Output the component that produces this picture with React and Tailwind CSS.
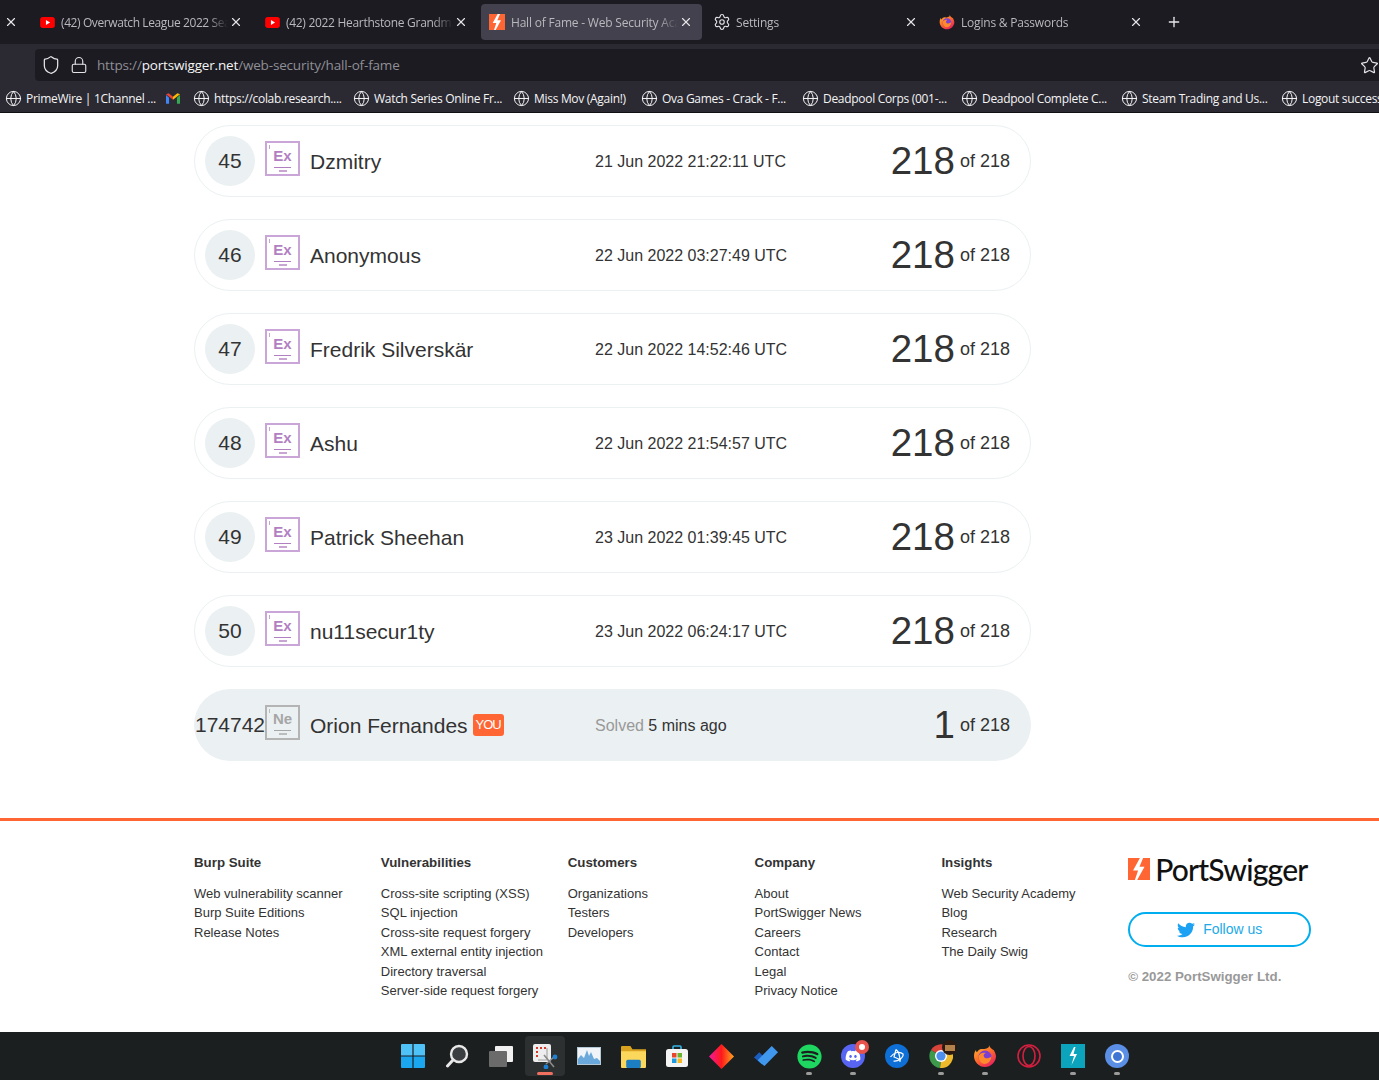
import { X, Plus, Shield, Lock, Star, Globe, Settings } from "lucide-react"
import { FaTwitter, FaSpotify, FaDiscord } from "react-icons/fa"

const Zap = ({ className }) => (
  <svg viewBox="0 0 24 24" className={className}>
    <rect width="24" height="24" fill="#ff6633" />
    <path d="M13 0 h3.5 l-4 9.5 h5.5 l-8 14.5 h-2.5 l3.5 -10.5 h-5.5z" fill="#fff" />
  </svg>
)

const YouTube = () => (
  <svg viewBox="0 0 16 12" className="w-[15px] h-[11px]">
    <rect width="16" height="12" rx="3" fill="#ff0000" />
    <path d="M6.3 3.4 L10.8 6 L6.3 8.6Z" fill="#fff" />
  </svg>
)

const FirefoxIcon = ({ className }) => (
  <svg viewBox="0 0 24 24" className={className}>
    <defs>
      <linearGradient id="ffx" x1="0" y1="0" x2="0.7" y2="1">
        <stop offset="0" stopColor="#ffbd2e" />
        <stop offset="0.55" stopColor="#ff6a2b" />
        <stop offset="1" stopColor="#e8215e" />
      </linearGradient>
    </defs>
    <path d="M16 1 C17 4 19 5 20.5 6 C20.7 6 22.5 8.5 23 12 C23 18 18 23 12 23 C6 23 1 18 1 12 C1 9 2 7 3 6 C3 7 3.5 8 4 8.3 C5 6 7 4.7 9 5 C12 5.5 17 4 16 1Z" fill="url(#ffx)" />
    <circle cx="12" cy="13" r="6.5" fill="#7b3fd1" />
    <path d="M5.5 12 C7 9 10 8 13 9 C11 9.5 10 11 11 13 C12.5 15 16 14.5 18.5 12.5 C18 17 15 20 11.5 20 C8 20 5.5 16 5.5 12Z" fill="#ff8a2b" />
  </svg>
)

const tabs = [
  { title: "(42) Overwatch League 2022 Season", icon: <YouTube />, tracking: "tracking-[-0.4px]" },
  { title: "(42) 2022 Hearthstone Grandmasters", icon: <YouTube />, tracking: "tracking-[-0.3px]" },
  { title: "Hall of Fame - Web Security Academy", icon: <Zap className="w-4 h-4" />, active: true, tracking: "tracking-[-0.2px]" },
  { title: "Settings", icon: <Settings size={18} strokeWidth={1.5} className="text-[#e4e4e7] shrink-0" />, tracking: "tracking-[-0.2px]" },
  { title: "Logins & Passwords", icon: <FirefoxIcon className="w-4 h-4" />, tracking: "tracking-[-0.2px]" },
]

const bookmarks = [
  { label: "PrimeWire | 1Channel ...", width: "w-[161px]" },
  { gmail: true, width: "w-[27px]" },
  { label: "https://colab.research....", width: "w-[160px]" },
  { label: "Watch Series Online Fr...", width: "w-[160px]" },
  { label: "Miss Mov (Again!)", width: "w-[128px]" },
  { label: "Ova Games - Crack - F...", width: "w-[161px]" },
  { label: "Deadpool Corps (001-...", width: "w-[159px]" },
  { label: "Deadpool Complete C...", width: "w-[160px]" },
  { label: "Steam Trading and Us...", width: "w-[160px]" },
  { label: "Logout success", width: "w-[97px]" },
]

const solvers = [
  { rank: 45, name: "Dzmitry", date: "21 Jun 2022 21:22:11 UTC" },
  { rank: 46, name: "Anonymous", date: "22 Jun 2022 03:27:49 UTC" },
  { rank: 47, name: "Fredrik Silverskär", date: "22 Jun 2022 14:52:46 UTC" },
  { rank: 48, name: "Ashu", date: "22 Jun 2022 21:54:57 UTC" },
  { rank: 49, name: "Patrick Sheehan", date: "23 Jun 2022 01:39:45 UTC" },
  { rank: 50, name: "nu11secur1ty", date: "23 Jun 2022 06:24:17 UTC" },
]

const footerColumns = [
  { title: "Burp Suite", links: ["Web vulnerability scanner", "Burp Suite Editions", "Release Notes"] },
  {
    title: "Vulnerabilities",
    links: [
      "Cross-site scripting (XSS)",
      "SQL injection",
      "Cross-site request forgery",
      "XML external entity injection",
      "Directory traversal",
      "Server-side request forgery",
    ],
  },
  { title: "Customers", links: ["Organizations", "Testers", "Developers"] },
  { title: "Company", links: ["About", "PortSwigger News", "Careers", "Contact", "Legal", "Privacy Notice"] },
  { title: "Insights", links: ["Web Security Academy", "Blog", "Research", "The Daily Swig"] },
]

const Badge = ({ symbol, grey }) => (
  <div
    className={`relative w-[35px] h-[35px] shrink-0 ml-[10px] -mt-[5px] border-2 flex flex-col items-center ${
      grey ? "border-[#b4b4b4] text-[#a6a6a6]" : "border-[#c9a5d8] text-[#b27fc2]"
    }`}
  >
    <span className="absolute left-[2px] top-[2px] w-px h-[4px] bg-current opacity-70" />
    <span className={`text-[15px] leading-[15px] font-bold ${grey ? "mt-[4px]" : "mt-[5px]"}`}>{symbol}</span>
    <span className="w-[17px] h-px bg-current mt-[4px]" />
    <span className="w-[8px] h-[2px] bg-current opacity-70 mt-[2px]" />
  </div>
)

const Row = ({ rank, name, date, you, score, grey }) => (
  <div
    className={`flex items-center h-[72px] rounded-full ${
      you ? "bg-[#ebf0f2] pl-[11px] pr-[21px]" : "border border-[#ebf0f2] pl-[10px] pr-[20px]"
    }`}
  >
    <div className="w-[50px] h-[50px] shrink-0 rounded-full bg-[#ebf0f2] flex items-center justify-center text-[21px] whitespace-nowrap">
      {rank}
    </div>
    <Badge symbol={you ? "Ne" : "Ex"} grey={grey} />
    <div className="w-[285px] ml-[10px] flex items-center shrink-0">
      <span className="text-[21px] mt-[1px]">{name}</span>
      {you && (
        <span className="ml-[5px] w-[31px] h-[22px] flex items-center justify-center bg-[#ff6633] text-white text-[13px] tracking-[-1px] rounded-[3px] -mt-[1px]">
          YOU
        </span>
      )}
    </div>
    <div className="text-[16px] mt-[1px]">
      {you ? (
        <>
          <span className="text-[#999999]">Solved</span> 5 mins ago
        </>
      ) : (
        date
      )}
    </div>
    <div className="ml-auto flex items-center">
      <span className="text-[38.5px] leading-none">{score}</span>
      <span className="text-[18px] ml-[5px] mt-[1px]">of 218</span>
    </div>
  </div>
)

const TaskIcon = ({ children, dot, active }) => (
  <div className="relative w-[44px] h-[40px] flex items-center justify-center">
    {active && <span className="absolute inset-y-0 left-[2px] right-[2px] rounded bg-[#2d3031]" />}
    <div className="relative flex items-center justify-center">{children}</div>
    {dot && <span className="absolute bottom-[1px] left-[19px] w-[6px] h-[3px] rounded-full bg-[#9b9b9b]" />}
    {active && <span className="absolute bottom-[1px] left-[14px] w-[16px] h-[3px] rounded-full bg-[#f0705f]" />}
  </div>
)

const App = () => {
  return (
    <div className="w-[1379px] h-[1080px] overflow-hidden flex flex-col bg-white text-[#333333] font-['Liberation_Sans',Arial,sans-serif]">
      {/* Browser chrome */}
      <div className="h-[113px] shrink-0 bg-[#2b2a33] font-['Open_Sans',sans-serif] border-b border-[#101014]">
        <div className="h-[44px] bg-[#1c1b22] flex pt-[4px] pl-[4px] text-[12px] text-[#b8b8bd]">
          <div className="w-[23px] h-[36px] flex items-center">
            <X size={14} className="text-[#e8e8ea]" />
          </div>
          <div className="w-[4px]" />
          {tabs.map((tab) => (
            <div
              key={tab.title}
              className={`w-[221px] h-[36px] mr-[4px] rounded-[4px] flex items-center pl-[8px] ${
                tab.active ? "bg-[#42414d]" : ""
              }`}
            >
              <div className="w-[16px] flex justify-center shrink-0">{tab.icon}</div>
              <div
                className={`w-[167px] ml-[6px] mt-[2px] overflow-hidden whitespace-nowrap ${tab.tracking} [mask-image:linear-gradient(to_right,black_88%,transparent)]`}
              >
                {tab.title}
              </div>
              <X size={14} className="ml-[1px] text-[#e4e4e7]" />
            </div>
          ))}
          <div className="h-[36px] flex items-center ml-[10px]">
            <Plus size={16} className="text-[#e8e8ea]" />
          </div>
        </div>
        <div className="h-[36px] pt-[5px] pl-[35px]">
          <div className="h-[32px] bg-[#1c1b22] rounded-l-[4px] flex items-center text-[13.5px] text-[#8f8f95] tracking-[-0.17px]">
            <Shield size={20} strokeWidth={1.5} className="ml-[6px] text-[#e4e4e7]" />
            <Lock size={18} strokeWidth={1.5} className="ml-[9px] text-[#e4e4e7]" />
            <span className="ml-[9px]">
              https://<span className="text-[#f4f4f5]">portswigger.net</span>/web-security/hall-of-fame
            </span>
            <Star size={19} strokeWidth={1.5} className="ml-auto text-[#e4e4e7]" />
          </div>
        </div>
        <div className="h-[32px] flex items-center pt-[5px] pl-[5px] text-[12px] text-[#f4f4f5] whitespace-nowrap tracking-[-0.3px]">
          {bookmarks.map((b, i) => (
            <div key={i} className={`${b.width} shrink-0 flex items-center`}>
              {b.gmail ? (
                <svg viewBox="0 0 16 12" className="w-[14px] h-[11px]">
                  <path d="M0 2 V12 H3.5 V5Z" fill="#4285f4" />
                  <path d="M16 2 V12 H12.5 V5Z" fill="#34a853" />
                  <path d="M0 1 L8 7.5 L8 4 L3 0Z" fill="#ea4335" />
                  <path d="M16 1 L8 7.5 L8 4 L13 0Z" fill="#fbbc04" />
                </svg>
              ) : (
                <>
                  <Globe size={17} strokeWidth={1.4} className="shrink-0" />
                  <span className="ml-[4px]">{b.label}</span>
                </>
              )}
            </div>
          ))}
        </div>
      </div>

      {/* Hall of fame list */}
      <div className="flex-1 min-h-0 pt-[12px] pl-[194px]">
        <div className="w-[837px] flex flex-col gap-[22px]">
          {solvers.map((s) => (
            <Row key={s.rank} {...s} score={218} />
          ))}
          <Row rank={174742} name="Orion Fernandes" you score={1} grey />
        </div>
      </div>

      {/* Footer */}
      <div className="h-[214px] shrink-0 border-t-[3px] border-[#ff6633] pl-[194px] pt-[32px] flex text-[13px] leading-[19.5px]">
        {footerColumns.map((col) => (
          <div key={col.title} className="w-[186.85px] shrink-0">
            <div className="font-bold mb-[11px] text-[13.3px]">{col.title}</div>
            {col.links.map((link) => (
              <div key={link}>{link}</div>
            ))}
          </div>
        ))}
        <div className="w-[183px] shrink-0 -mt-[1px]">
          <div className="flex items-center h-[34px]">
            <Zap className="w-[22px] h-[22px]" />
            <span className="ml-[5px] text-[30px] leading-none text-[#111111] font-medium font-['Lato',sans-serif] tracking-[-0.8px]">
              PortSwigger
            </span>
          </div>
          <div className="mt-[26px] h-[35px] rounded-full border-2 border-[#00aeef] flex items-center justify-center text-[14px] text-[#21a9e8]">
            <FaTwitter size={18} className="text-[#1da1f2]" />
            <span className="ml-[8px]">Follow us</span>
          </div>
          <div className="mt-[20px] font-bold text-[13.3px] text-[#999999]">© 2022 PortSwigger Ltd.</div>
        </div>
      </div>

      {/* Taskbar */}
      <div className="h-[48px] shrink-0 bg-[#1c1f20] flex items-center pl-[391px]">
        <TaskIcon>
          <svg viewBox="0 0 24 24" className="w-[24px] h-[24px]">
            <path d="M0 1 a1 1 0 0 1 1 -1 H11.4 V11.4 H0Z M12.6 0 H23 a1 1 0 0 1 1 1 V11.4 H12.6Z" fill="#4fc3f7" />
            <path d="M0 12.6 H11.4 V24 H1 a1 1 0 0 1 -1 -1Z M12.6 12.6 H24 V23 a1 1 0 0 1 -1 1 H12.6Z" fill="#1aa7f0" />
          </svg>
        </TaskIcon>
        <TaskIcon>
          <svg viewBox="0 0 24 24" className="w-[24px] h-[24px]" fill="none">
            <circle cx="14" cy="10" r="8" stroke="#e8e8e8" strokeWidth="2.4" fill="#3b3e40" />
            <path d="M8 16 L2.5 22" stroke="#e8e8e8" strokeWidth="3" strokeLinecap="round" />
          </svg>
        </TaskIcon>
        <TaskIcon>
          <svg viewBox="0 0 24 24" className="w-[24px] h-[24px]">
            <rect x="6" y="2" width="18" height="16" rx="1" fill="#f1f1f1" />
            <rect x="0" y="7" width="18" height="16" rx="1" fill="#6b6b6b" />
          </svg>
        </TaskIcon>
        <TaskIcon active>
          <svg viewBox="0 0 26 26" className="w-[26px] h-[26px]" fill="none">
            <rect x="1" y="1" width="18" height="18" rx="2" fill="#eeeeee" />
            <path d="M4 4 h2 v2 h-2z M8 4 h2 v2 h-2z M12 4 h2 v2 h-2z M4 8 h2 v2 h-2z M4 12 h2 v2 h-2z" fill="#d8382c" />
            <path d="M15 5 V17 H6" stroke="#b9b9b9" strokeWidth="1.6" />
            <path d="M12 12 L22 24 M22 14 L14 21" stroke="#8a8a8a" strokeWidth="1.6" />
            <circle cx="23" cy="14" r="2.4" fill="#1f7fd0" />
            <circle cx="14" cy="24" r="2.4" fill="#1f7fd0" />
          </svg>
        </TaskIcon>
        <TaskIcon>
          <svg viewBox="0 0 24 18" className="w-[24px] h-[18px]">
            <rect width="24" height="18" fill="#b5c8d6" />
            <rect x="1" y="1" width="22" height="16" fill="#f0f4f8" />
            <path d="M1 17 V12 L4 8 L7 11 L10 3 L12 9 L14 5 L17 12 L20 11 L23 14 V17Z" fill="#6ba8dc" />
          </svg>
        </TaskIcon>
        <TaskIcon>
          <svg viewBox="0 0 24 24" className="w-[25px] h-[25px]">
            <path d="M0 3 a1 1 0 0 1 1 -1 H9 L11 5 H24 V22 H0Z" fill="#d9a21f" />
            <path d="M0 7 H24 V22 a1 1 0 0 1 -1 1 H1 a1 1 0 0 1 -1 -1Z" fill="#fbd75b" />
            <rect x="5" y="15" width="14" height="8" rx="1.5" fill="#1c7fc4" />
          </svg>
        </TaskIcon>
        <TaskIcon>
          <svg viewBox="0 0 24 24" className="w-[24px] h-[24px]" fill="none">
            <path d="M8 5 V3 a1 1 0 0 1 1 -1 H15 a1 1 0 0 1 1 1 V5" stroke="#35b4e8" strokeWidth="1.6" />
            <rect x="1" y="5" width="22" height="18" rx="2.5" fill="#f4f4f4" />
            <rect x="7" y="9" width="4.5" height="4.5" fill="#e8452c" />
            <rect x="12.5" y="9" width="4.5" height="4.5" fill="#6cb32c" />
            <rect x="7" y="14.5" width="4.5" height="4.5" fill="#1e9be0" />
            <rect x="12.5" y="14.5" width="4.5" height="4.5" fill="#fbb81c" />
          </svg>
        </TaskIcon>
        <TaskIcon>
          <svg viewBox="0 0 24 24" className="w-[25px] h-[25px]">
            <defs>
              <linearGradient id="diamond" x1="0" y1="0" x2="1" y2="0">
                <stop offset="0" stopColor="#f0189c" />
                <stop offset="0.5" stopColor="#ff1a1a" />
                <stop offset="1" stopColor="#ffa51f" />
              </linearGradient>
            </defs>
            <path d="M12 0 L24 12 L12 24 L0 12Z" fill="url(#diamond)" />
          </svg>
        </TaskIcon>
        <TaskIcon>
          <svg viewBox="0 0 24 24" className="w-[25px] h-[25px]">
            <path d="M1 13 L6 8 L12 14 L8 19Z" fill="#1a5dbf" />
            <path d="M8 19 L4.5 15.5 L18 2 L24 8 L11 21Z" fill="#3f97ee" />
          </svg>
        </TaskIcon>
        <TaskIcon dot>
          <FaSpotify size={25} className="text-[#1ed760]" />
        </TaskIcon>
        <TaskIcon dot>
          <div className="w-[24px] h-[24px] rounded-full bg-[#5865f2] flex items-center justify-center">
            <FaDiscord size={16} className="text-white" />
          </div>
          <span className="absolute top-[-4px] right-[-4px] w-[14px] h-[14px] rounded-full bg-[#e8534d] flex items-center justify-center">
            <span className="w-[6px] h-[6px] rounded-full bg-white" />
          </span>
        </TaskIcon>
        <TaskIcon>
          <div className="w-[24px] h-[24px] rounded-full bg-[#0e6fd6] flex items-center justify-center">
            <svg viewBox="0 0 16 16" className="w-[16px] h-[16px]" fill="none" stroke="#fff" strokeWidth="1.2">
              <path d="M7 1.5 L5 9 L12 12 M1.5 9 C5 4 11 3 14 6 C15 9 9 14 4.5 13 M7 1.5 C9 3 11 8 11 14" />
            </svg>
          </div>
        </TaskIcon>
        <TaskIcon dot>
          <svg viewBox="0 0 24 24" className="w-[24px] h-[24px]">
            <path d="M12 12 L2 6 A12 12 0 0 1 22.4 6Z" fill="#d8433a" />
            <path d="M12 12 L22.4 6 A12 12 0 0 1 11 24Z" fill="#eeb92a" />
            <path d="M12 12 L11 24 A12 12 0 0 1 2 6Z" fill="#3d9a4c" />
            <circle cx="12" cy="12" r="6" fill="#fff" />
            <circle cx="12" cy="12" r="4.6" fill="#4d8fee" />
          </svg>
          <span className="absolute top-[-4px] right-[-4px] w-[15px] h-[15px] rounded-full bg-[#2a1a12] flex items-center justify-center">
            <span className="w-[10px] h-[6px] bg-[#b5814a]" />
          </span>
        </TaskIcon>
        <TaskIcon dot>
          <FirefoxIcon className="w-[24px] h-[24px]" />
        </TaskIcon>
        <TaskIcon>
          <svg viewBox="0 0 24 24" className="w-[24px] h-[24px]" fill="none" stroke="#d41f3f">
            <circle cx="12" cy="12" r="11" strokeWidth="1.6" />
            <ellipse cx="12" cy="12" rx="6" ry="9.5" strokeWidth="1.6" />
          </svg>
        </TaskIcon>
        <TaskIcon dot>
          <svg viewBox="0 0 24 24" className="w-[24px] h-[24px]">
            <rect width="24" height="24" fill="#0ca4bd" />
            <path d="M13 3 L8.5 12 H13 L10.5 21 L16 10 H12.5 L14.5 3Z" fill="#fff" />
          </svg>
        </TaskIcon>
        <TaskIcon dot>
          <div className="w-[24px] h-[24px] rounded-full bg-[#5b8fe6] flex items-center justify-center">
            <span className="w-[13px] h-[13px] rounded-full border-2 border-white bg-[#3f76d4]" />
          </div>
        </TaskIcon>
      </div>
    </div>
  )
}

export default App
